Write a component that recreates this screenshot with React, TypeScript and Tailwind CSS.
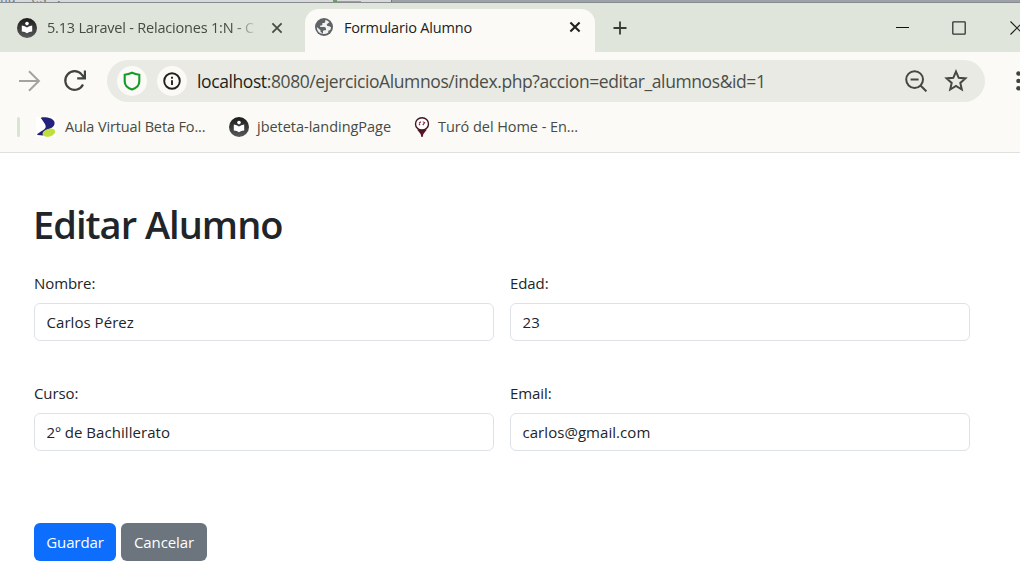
import type { ReactNode } from "react";

function BookIcon({ className }: { className: string }) {
  return (
    <svg viewBox="0 0 20 20" className={className}>
      <defs>
        <linearGradient id="book" x1="0" y1="0" x2="0" y2="1">
          <stop offset="0" stopColor="#1b1b1b" />
          <stop offset="1" stopColor="#5a5a5a" />
        </linearGradient>
      </defs>
      <circle cx="10" cy="10" r="10" fill="url(#book)" />
      <circle cx="10" cy="5.6" r="1.8" fill="#fff" />
      <path d="M4.8 7.4 Q8 7.6 10 9.5 Q12 7.6 15.2 7.4 V13.4 Q12 13.5 10 15.3 Q8 13.5 4.8 13.4Z" fill="#fff" />
    </svg>
  );
}

function GlobeIcon() {
  return (
    <svg viewBox="0 0 18 18" className="size-[18px] shrink-0">
      <circle cx="9" cy="9" r="9" fill="#5f6368" />
      <path d="M10.3 1.9 L10.2 3.9 Q10 5 8.7 5 H7.4 V6.6 Q7.3 7.6 6.2 7.6 H5.2 V9 H9.2 Q11 9.2 11 11 V12.3 H9.2 Q8 12.4 8 13.5 V16 Q2 15 1.8 9 L5.5 12.3 V13.5 Q5.7 14.6 7 14.8 L8 16.1 Q11 16.3 13.2 14.7 L13.4 12.6 H14 Q15.8 12.3 16.1 9.5 L14.4 8.2 L12.4 8 L11.7 6.4 L13 5.2 L14.4 4.2 Q12.9 2.4 10.3 1.9Z" fill="#f1f2ee" />
    </svg>
  );
}

function Close({ className }: { className: string }) {
  return (
    <svg viewBox="0 0 12 12" className={className} fill="none" stroke="currentColor">
      <path d="M1.4 1.4 10.6 10.6 M10.6 1.4 1.4 10.6" />
    </svg>
  );
}

function TopStrip() {
  return (
    <div className="flex h-[3px] shrink-0 overflow-hidden border-b border-[#858b8f] bg-[#9da2a7]">
      <div className="relative w-[392px] shrink-0 border-r border-[#777] bg-[#d9d9d9]">
        <span className="absolute bottom-[-4px] left-0 font-['Liberation_Mono'] text-[13px] leading-[13px] whitespace-pre text-[#6d7ba0]">
          ng <span className="text-[#608060]">"es"</span>;
        </span>
        <span className="absolute bottom-0 left-[333px] h-[2px] w-1 bg-[#69a35a]" />
        <span className="absolute bottom-0 left-[337px] h-px w-6 bg-[#a895b5]" />
      </div>
    </div>
  );
}

function TabBar() {
  return (
    <div className="flex h-[49px] shrink-0 bg-[#dfe5da]">
      <div className="flex w-[305px] items-center rounded-br-[3px] pl-[17px] text-[#474b43]">
        <BookIcon className="size-5 shrink-0" />
        <span className="ml-[10px] w-[212px] overflow-hidden text-[14.5px] tracking-[-0.2px] whitespace-nowrap [mask-image:linear-gradient(to_right,black_186px,transparent_211px)]">
          5.13 Laravel - Relaciones 1:N - C
        </span>
        <Close className="ml-[12px] size-3 shrink-0 stroke-[1.8]" />
      </div>
      <div className="mt-[6px] flex w-[290px] items-center rounded-t-[14px] bg-[#fbfaf6] pr-[14px] pb-[7px] pl-[10px] text-[#20221e]">
        <GlobeIcon />
        <span className="ml-[11px] flex-1 pt-[2px] text-[14.5px] tracking-[-0.17px] whitespace-nowrap">Formulario Alumno</span>
        <Close className="size-3 stroke-[2.1]" />
      </div>
      <div className="flex flex-1 items-center pl-[18px] text-[#373b34]">
        <svg viewBox="0 0 14 14" className="size-[14px]" stroke="currentColor" strokeWidth="1.8">
          <path d="M7 .5V13.5M.5 7H13.5" />
        </svg>
        <div className="ml-auto h-px w-[13px] bg-[#111]" />
        <svg viewBox="0 0 14 14" className="ml-[43px] size-[14px]" fill="none" stroke="#333" strokeWidth="1.3">
          <rect x=".8" y=".8" width="12.4" height="12.4" rx=".7" />
        </svg>
        <svg viewBox="0 0 10 14" className="ml-[44px] h-[14px] w-[10px]" fill="none" stroke="#222" strokeWidth="1.2">
          <path d="M.5 .5 13.5 13.5M13.5 .5 .5 13.5" />
        </svg>
      </div>
    </div>
  );
}

function Toolbar() {
  return (
    <div className="flex h-[58px] shrink-0 items-center overflow-hidden pl-[19px]">
      <svg viewBox="0 0 22 22" className="size-[22px] shrink-0" fill="none" stroke="#a3a49f" strokeWidth="2">
        <path d="M0 11H20M10 1.2 19.9 11 10 20.8" />
      </svg>
      <svg viewBox="0 0 24 24" className="ml-[22px] size-6 shrink-0" fill="none" stroke="#41443e" strokeWidth="2.2">
        <path d="M20 15.5A9.3 9.3 0 1 1 18.6 5.4L21.4 8.4M21.9 1.6V9.3H14.2" />
      </svg>
      <div className="ml-5 flex h-[42px] w-[878px] shrink-0 items-center rounded-full bg-[#e9eae4] pr-[17px] pl-[10px]">
        <span className="flex size-[30px] items-center justify-center rounded-full bg-[#fbfaf6]">
          <svg viewBox="0 0 18 20" className="h-5 w-[18px]" fill="none" stroke="#149a27" strokeWidth="2.1">
            <path d="M9 1.7 Q12.5 3.2 16.3 3.8 V10.5 C16.3 14.8 12.8 17.2 9 18.5 C5.2 17.2 1.7 14.8 1.7 10.5 V3.8 Q5.5 3.2 9 1.7Z" />
          </svg>
        </span>
        <span className="ml-[10px] flex size-[30px] items-center justify-center rounded-full bg-[#fbfaf6]">
          <svg viewBox="0 0 18 18" className="size-[18px]" fill="none" stroke="#20221e" strokeWidth="1.9">
            <circle cx="9" cy="9" r="7.8" />
            <path d="M9 8.2V13M9 4.7V6.7" />
          </svg>
        </span>
        <span className="ml-[10px] flex-1 text-[17.5px] tracking-[-0.4px] whitespace-nowrap text-[#4b4e48]">
          <span className="text-[#1d1f1b]">localhost</span>:8080/ejercicioAlumnos/index.php?accion=editar_alumnos&amp;id=1
        </span>
        <svg viewBox="0 0 22 22" className="size-[22px]" fill="none" stroke="#454842" strokeWidth="2">
          <circle cx="9.6" cy="9.6" r="8.4" />
          <path d="M5.6 9.6H13.6M15.5 15.5 21.4 21.4" />
        </svg>
        <svg viewBox="0 0 24 24" className="ml-[17px] size-6" fill="none" stroke="#454842" strokeWidth="2">
          <path d="M12 2.6 14.7 8.8 21.4 9.4 16.3 13.9 17.8 20.5 12 17 6.2 20.5 7.7 13.9 2.6 9.4 9.3 8.8Z" />
        </svg>
      </div>
      <svg viewBox="0 0 4 20" className="ml-[31px] h-5 w-1 shrink-0" fill="#41443e">
        <circle cx="2.4" cy="2.5" r="2.2" />
        <circle cx="2.4" cy="9.9" r="2.2" />
        <circle cx="2.4" cy="17.3" r="2.2" />
      </svg>
    </div>
  );
}

function Bookmarks() {
  return (
    <div className="flex h-[43px] shrink-0 items-center border-b border-[#e0e0de] pb-[8px] pl-[17px] text-[14.5px] whitespace-nowrap text-[#474b43]">
      <div className="h-5 w-[3px] shrink-0 rounded-full bg-[#d9e4d3]" />
      <svg viewBox="0 0 20 20" className="ml-[16px] size-5 shrink-0">
        <path d="M0 0H20V20H0Z" fill="#fff" />
        <path d="M6 .3C12 0 18.6 1.6 18.6 6C18.6 9.3 15.5 11.2 12.5 12.2C8.5 13.6 6.5 15.2 7.2 18.6L1.5 18C0 17 4.2 15 8 12.4C11.4 10 9.6 7.5 4.8 1Z" fill="#22227d" />
        <ellipse cx="12.9" cy="15.7" rx="6.5" ry="3.9" transform="rotate(-16 12.9 15.7)" fill="#bfe03c" />
      </svg>
      <span className="ml-[9px] w-[142px] shrink-0 tracking-[-0.13px]">Aula Virtual Beta Fo...</span>
      <BookIcon className="ml-[22px] size-5 shrink-0" />
      <span className="ml-[8px] w-[134px] shrink-0 tracking-[-0.03px]">jbeteta-landingPage</span>
      <svg viewBox="0 0 16 20" className="ml-[23px] h-5 w-4 shrink-0">
        <path d="M3 12.4H13L9.4 17 8.6 20H7.4L6.6 17Z" fill="#59151f" />
        <ellipse cx="8" cy="6.9" rx="6.5" ry="6.1" fill="#fff" stroke="#3b1820" strokeWidth="1.4" />
        <path d="M5 6.2 6.8 4.8M5 8 6 7M8.8 8.2 11 5M9 5.3 9.6 4.7" stroke="#8c2434" strokeWidth="1.2" />
      </svg>
      <span className="ml-[8px] tracking-[-0.06px]">Turó del Home - En...</span>
    </div>
  );
}

function Field({ label, value }: { label: string; value: string }) {
  return (
    <label className="block w-[460px] text-[15px] leading-6 tracking-[-0.08px]">
      <span className="mb-2 block">{label}</span>
      <input
        defaultValue={value}
        className="block h-[38px] w-full rounded-md border border-[#dee2e6] bg-white pr-3 pl-[11.5px] tracking-[0.05px] outline-none"
      />
    </label>
  );
}

function Button({ className, children }: { className: string; children: ReactNode }) {
  return (
    <button className={`h-[38px] rounded-md text-[15px] tracking-[-0.1px] text-white ${className}`}>{children}</button>
  );
}

export default function App() {
  return (
    <div className="flex h-[582px] w-[1020px] flex-col overflow-hidden bg-white font-['Open_Sans',sans-serif]">
      <TopStrip />
      <div className="flex shrink-0 flex-col bg-[#fbfaf6]">
        <TabBar />
        <Toolbar />
        <Bookmarks />
      </div>
      <main className="px-[34px] pt-12 text-[#212529]">
        <h1 className="-ml-px h-12 text-[38px] leading-[47px] font-semibold tracking-[-0.98px]">Editar Alumno</h1>
        <form className="mt-[22px]">
          <div className="grid grid-cols-[460px_460px] gap-x-4 gap-y-10">
            <Field label="Nombre:" value="Carlos Pérez" />
            <Field label="Edad:" value="23" />
            <Field label="Curso:" value="2º de Bachillerato" />
            <Field label="Email:" value="carlos@gmail.com" />
          </div>
          <div className="mt-[72px] flex gap-[5px]">
            <Button className="w-[82px] bg-[#0d6efd]">Guardar</Button>
            <Button className="w-[86px] bg-[#6c757d]">Cancelar</Button>
          </div>
        </form>
      </main>
    </div>
  );
}
